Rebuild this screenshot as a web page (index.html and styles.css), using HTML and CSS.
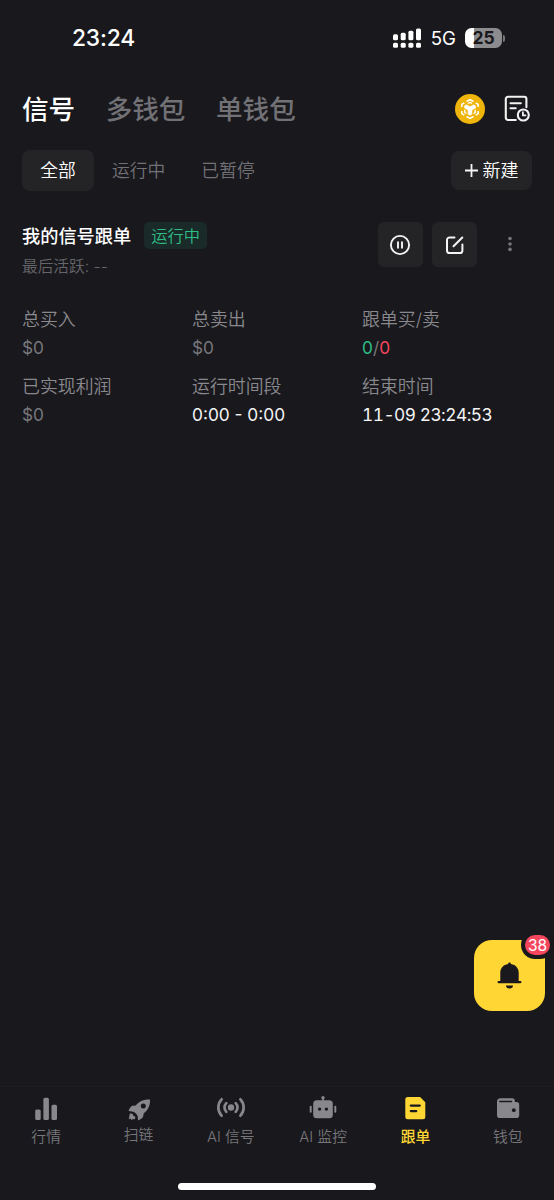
FILE: index.html
```
<!doctype html>
<html lang="zh-CN">
<head>
    <meta charset="UTF-8">
    <meta name="viewport" content="width=device-width, initial-scale=1.0">
    <title>跟单</title>
    <link rel="stylesheet" href="styles.css">
</head>
<body>
    <div class="app">
        <div class="status">
            <span class="time">23:24</span>
            <div class="status-right">
                <svg class="signal" width="28" height="20" viewBox="0 0 28 20" fill="#fff">
                    <rect x="0" y="6.3" width="5" height="6" rx="1.5"/>
                    <rect x="7.7" y="4.8" width="5" height="7.5" rx="1.5"/>
                    <rect x="15.4" y="2.8" width="5" height="9.5" rx="1.5"/>
                    <rect x="23" y="0.6" width="5" height="11.7" rx="1.5"/>
                    <rect x="0" y="14.7" width="5" height="5" rx="1.5"/>
                    <rect x="7.7" y="14.7" width="5" height="5" rx="1.5"/>
                    <rect x="15.4" y="14.7" width="5" height="5" rx="1.5"/>
                    <rect x="23" y="14.7" width="5" height="5" rx="1.5"/>
                </svg>
                <span class="net">5G</span>
                <div class="battery">25</div>
                <div class="battery-cap"></div>
            </div>
        </div>

        <div class="header">
            <div class="tabs">
                <span class="tab active">信号</span>
                <span class="tab">多钱包</span>
                <span class="tab">单钱包</span>
            </div>
            <svg class="coin" width="30" height="30" viewBox="0 0 30 30">
                <circle cx="15" cy="15" r="15" fill="#f0b50b"/>
                <path d="M11.5 7.5 15 5.5l3.5 2M9.3 8.8 6.8 10.3V13M20.7 8.800l2.500 1.500V13M6.800 17v2.700l2.500 1.500M23.200 17v2.700l-2.500 1.500M11.500 22.500l3.500 2 3.500-2" fill="none" stroke="#fff" stroke-width="1.5"/>
                <path d="M9.8 15.8v2.700l1.700 1M20.200 15.800v2.700l-1.700 1M13 9.500l2-1.100 2 1.100" fill="none" stroke="#fff" stroke-width="1.4"/>
                <path d="M9.2 11.8 11.5 10.5 15 12.5 18.5 10.5 20.8 11.8v2.300L17.200 16.200v4L15 21.500l-2.200-1.300v-4L9.200 14.100z" fill="#fff"/>
            </svg>
            <svg class="history" width="26" height="27" viewBox="0 0 26 27" fill="none" stroke="#f2f2f3" stroke-width="2.1" stroke-linecap="round" stroke-linejoin="round">
                <path d="M11.8 25H4a2.2 2.2 0 0 1-2.2-2.2V4A2.2 2.2 0 0 1 4 1.8h16.2A2.2 2.2 0 0 1 22.4 4v8.3"/>
                <path d="M6.5 8.2h10.3M6.5 13.3h5.2"/>
                <circle cx="19.3" cy="20" r="5.5"/>
                <path d="M18.9 17.2v3.2h2.5" stroke-width="1.8"/>
            </svg>
        </div>

        <div class="filters">
            <span class="filter active">全部</span>
            <span class="filter">运行中</span>
            <span class="filter">已暂停</span>
            <button class="add">
                <svg width="13" height="13" viewBox="0 0 13 13" stroke="#f4f4f5" stroke-width="1.8"><path d="M6.5 0v13M0 6.5h13"/></svg>
                <span>新建</span>
            </button>
        </div>

        <div class="card">
            <div class="card-head">
                <div class="card-info">
                    <div class="card-title"><span>我的信号跟单</span><span class="tag">运行中</span></div>
                    <div class="last">最后活跃: --</div>
                </div>
                <button class="icon-btn">
                    <svg width="22" height="22" viewBox="0 0 22 22" fill="none" stroke="#f4f4f5" stroke-width="1.9"><circle cx="11" cy="11" r="9.1"/><path d="M9 7.4v7.2M13 7.4v7.2"/></svg>
                </button>
                <button class="icon-btn">
                    <svg width="20" height="20" viewBox="0 0 20 20" fill="none" stroke="#f4f4f5" stroke-width="2" stroke-linecap="round"><path d="M9.5 2.4H4.6A2.6 2.6 0 0 0 2 5v10.4A2.6 2.6 0 0 0 4.6 18h10.2a2.6 2.6 0 0 0 2.6-2.6V9.5M8.5 11.3 17.3 2.5"/></svg>
                </button>
                <svg class="more" width="6" height="16" viewBox="0 0 6 16" fill="#77777b"><circle cx="3" cy="2.5" r="1.8"/><circle cx="3" cy="8" r="1.8"/><circle cx="3" cy="13.4" r="1.8"/></svg>
            </div>
            <div class="stats">
                <div class="stat">
                    <div class="label">总买入</div>
                    <div class="value">$0</div>
                </div>
                <div class="stat">
                    <div class="label">总卖出</div>
                    <div class="value">$0</div>
                </div>
                <div class="stat">
                    <div class="label">跟单买/卖</div>
                    <div class="value"><span class="buy">0</span>/<span class="sell">0</span></div>
                </div>
                <div class="stat">
                    <div class="label">已实现利润</div>
                    <div class="value">$0</div>
                </div>
                <div class="stat">
                    <div class="label">运行时间段</div>
                    <div class="value light">0:00 - 0:00</div>
                </div>
                <div class="stat">
                    <div class="label">结束时间</div>
                    <div class="value light date">11-09 23:24:53</div>
                </div>
            </div>
        </div>

        <button class="bell">
            <svg width="25" height="27" viewBox="0 0 25 27" fill="#19181d">
                <path d="M11.1 2a1.4 1.4 0 0 1 2.8 0c4.8.7 7.8 4.2 7.8 8.6V19h1.7a1.1 1.1 0 0 1 0 2.2H1.6a1.1 1.1 0 0 1 0-2.2h1.7v-8.4C3.3 6.2 6.3 2.7 11.1 2z"/>
                <path d="M9 23.6h7a3.5 3 0 0 1-7 0z"/>
            </svg>
            <span class="badge">38</span>
        </button>

        <div class="nav">
            <div class="nav-item">
                <svg width="28" height="26" viewBox="0 0 28 26" fill="#88888c">
                    <rect x="3.2" y="13.5" width="5.5" height="10.5" rx="1.5"/>
                    <rect x="11.4" y="1.7" width="5.5" height="22.3" rx="1.5"/>
                    <rect x="19.5" y="8.8" width="5.5" height="15.2" rx="1.5"/>
                </svg>
                <span>行情</span>
            </div>
            <div class="nav-item raised">
                <svg width="28" height="26" viewBox="0 0 28 26" fill="#88888c">
                    <path fill-rule="evenodd" d="M26 3.5C20 3.4 15.2 5 11.8 9.500l-3.600.3c-1 .2-3.800 4.200-3.500 5.300l4.500.6c2 .7 3.800 2.500 4.600 4.700l.2 3.700c.4 1 4.300-1.700 5-3l.8-3.800C24.500 13.700 26.300 9 26 3.500zM19.300 7.600a2.500 2.500 0 1 1 0 5 2.500 2.500 0 0 1 0-5z"/>
                    <path d="M6 17.300 8.700 18l.6 1.800 2.100.9-.5 2.500-2-.3-1.300 1.300-1.100-1.600-1.800.7.500-2.400z"/>
                </svg>
                <span>扫链</span>
            </div>
            <div class="nav-item">
                <svg width="28" height="26" viewBox="0 0 28 26" fill="none" stroke="#88888c" stroke-width="2.7" stroke-linecap="round">
                    <circle cx="14" cy="11.5" r="3.2" fill="#88888c" stroke="none"/>
                    <path d="M9.3 7.1a6.3 6.3 0 0 0 0 8.8M18.7 7.1a6.3 6.3 0 0 1 0 8.8M4.6 3.3a12 12 0 0 0 0 16.4M23.4 3.3a12 12 0 0 1 0 16.4"/>
                </svg>
                <span>AI 信号</span>
            </div>
            <div class="nav-item">
                <svg width="28" height="26" viewBox="0 0 28 26" fill="#88888c">
                    <circle cx="14" cy="1.7" r="1.7"/>
                    <path d="M13.2 1.5h1.6v4h-1.6z"/>
                    <rect x="4.2" y="4.3" width="19.6" height="18" rx="3.5"/>
                    <rect x="0.7" y="9.7" width="2" height="7" rx="1"/>
                    <rect x="25.3" y="9.7" width="2" height="7" rx="1"/>
                    <circle cx="10.6" cy="13.1" r="1.7" fill="#19181d"/>
                    <circle cx="17.4" cy="13.1" r="1.7" fill="#19181d"/>
                </svg>
                <span>AI 监控</span>
            </div>
            <div class="nav-item active">
                <svg width="28" height="26" viewBox="0 0 28 26">
                    <path d="M6.8 1h12.3l5.2 5.2v14.6a2.5 2.5 0 0 1-2.5 2.5h-15a2.5 2.5 0 0 1-2.5-2.5V3.5A2.5 2.5 0 0 1 6.8 1z" fill="#ffd633"/>
                    <path d="M9.8 9.6h9M9.8 15.1h5.5" stroke="#19181d" stroke-width="2.2" stroke-linecap="round"/>
                </svg>
                <span>跟单</span>
            </div>
            <div class="nav-item">
                <svg width="28" height="26" viewBox="0 0 28 26">
                    <path d="M6.5 2.3h11.8a2.5 2.5 0 0 1 2.5 2.5V6h1.7a2.7 2.7 0 0 1 2.7 2.7v10.6a2.8 2.8 0 0 1-2.8 2.8H5.8A2.8 2.8 0 0 1 3 19.3V5.8a3.5 3.5 0 0 1 3.5-3.5z" fill="#88888c"/>
                    <path d="M5.8 5.5h11.7" stroke="#19181d" stroke-width="1.5" stroke-linecap="round"/>
                    <circle cx="19.8" cy="14.2" r="1.9" fill="#19181d"/>
                </svg>
                <span>钱包</span>
            </div>
        </div>
        <div class="home-bar"></div>
    </div>
</body>
</html>
```
FILE: styles.css
```
* {
    box-sizing: border-box;
}
body {
    margin: 0;
    background: #19181d;
    color: #fff;
    font-family: Inter, "Noto Sans CJK SC", sans-serif;
    font-weight: 350;
}
button {
    border: none;
    padding: 0;
    color: inherit;
    font-family: inherit;
    font-weight: inherit;
    cursor: pointer;
}
svg {
    display: block;
    flex: none;
}
.app {
    position: relative;
    height: 1200px;
    display: flex;
    flex-direction: column;
    overflow: hidden;
}
.status {
    height: 76px;
    padding: 0 49px 0 72px;
    display: flex;
    align-items: center;
    justify-content: space-between;
}
.time {
    padding-bottom: 2px;
    font-size: 22.8px;
    font-weight: 550;
    letter-spacing: -0.2px;
}
.status-right {
    display: flex;
    align-items: center;
}
.net {
    margin: 0 9px 0 10px;
    font-size: 18.7px;
    font-weight: 400;
}
.battery {
    width: 37px;
    height: 20px;
    border-radius: 6.5px;
    background: linear-gradient(90deg, #fff 9px, #8c8c8e 9px);
    color: #19181d;
    font-size: 17.5px;
    font-weight: 650;
    line-height: 20px;
    text-align: center;
}
.battery-cap {
    width: 2px;
    height: 7px;
    margin-left: 1px;
    border-radius: 0 2px 2px 0;
    background: #77777a;
}
.header {
    height: 64px;
    padding: 1px 24px 0 22px;
    display: flex;
    align-items: center;
}
.tabs {
    flex: 1;
    display: flex;
    gap: 30.5px;
}
.tab {
    color: #717176;
    font-size: 26.6px;
    line-height: 36px;
    font-weight: 500;
}
.tab.active {
    color: #fff;
}
.history {
    margin-left: 19px;
}
.filters {
    height: 61px;
    padding: 0 22px;
    display: flex;
    align-items: center;
    font-size: 17.8px;
    line-height: 26px;
}
.filter {
    margin-right: 36px;
    color: #717176;
}
.filter.active {
    width: 72px;
    height: 41px;
    margin-right: 18px;
    border-radius: 8px;
    background: #242426;
    color: #fff;
    line-height: 42px;
    text-align: center;
}
.add {
    width: 81px;
    height: 39px;
    margin-left: auto;
    display: flex;
    align-items: center;
    justify-content: center;
    gap: 5px;
    border-radius: 8px;
    background: #242426;
    font-size: 18px;
    line-height: 24px;
}
.card {
    padding: 21px 22px 0;
}
.card-head {
    display: flex;
    align-items: flex-start;
}
.card-info {
    flex: 1;
}
.card-title {
    height: 27px;
    display: flex;
    align-items: center;
    font-size: 18.2px;
    line-height: 26px;
    font-weight: 500;
}
.tag {
    width: 63px;
    height: 27px;
    margin-left: 13px;
    border-radius: 5px;
    background: #192a29;
    color: #2ebd85;
    font-size: 16.3px;
    font-weight: 350;
    line-height: 28px;
    text-align: center;
}
.last {
    margin-top: 7px;
    color: #66666a;
    font-size: 15.7px;
    line-height: 22px;
}
.icon-btn {
    width: 45px;
    height: 45px;
    margin-right: 9.5px;
    display: flex;
    align-items: center;
    justify-content: center;
    border-radius: 6px;
    background: #242426;
}
.more {
    margin: 14px 19.5px 0 20px;
}
.stats {
    margin-top: 28px;
    display: grid;
    grid-template-columns: repeat(3, 1fr);
    row-gap: 10px;
}
.label {
    height: 28px;
    color: #89898d;
    font-size: 17.9px;
    line-height: 28px;
}
.value {
    height: 28.5px;
    color: #77777b;
    font-size: 17.3px;
    font-weight: 400;
    line-height: 28px;
    white-space: nowrap;
}
.light {
    color: #f4f4f5;
}
.date {
    font-variant-numeric: tabular-nums;
    letter-spacing: -0.5px;
}
.buy {
    color: #2ebd85;
}
.sell {
    color: #f6465d;
}
.bell {
    position: absolute;
    right: 9px;
    top: 940px;
    width: 71px;
    height: 71px;
    display: flex;
    align-items: center;
    justify-content: center;
    border-radius: 18px;
    background: #ffd633;
}
.badge {
    position: absolute;
    right: -9px;
    top: -9px;
    height: 28px;
    width: 33px;
    border: 4px solid #19181d;
    border-radius: 14px;
    background: #f6465d;
    color: #fff;
    font-size: 15.5px;
    font-weight: 400;
    line-height: 21px;
    text-align: center;
}
.nav {
    height: 77px;
    margin-top: auto;
    padding-top: 9px;
    display: grid;
    grid-template-columns: repeat(6, 1fr);
    border-top: 1px solid #1d1c21;
}
.nav-item {
    display: flex;
    flex-direction: column;
    align-items: center;
    gap: 4px;
    color: #77777b;
    font-size: 14.8px;
    line-height: 22px;
    white-space: nowrap;
}
.nav-item.raised span {
    margin-top: -2px;
}
.nav-item.active {
    color: #ffd633;
    font-weight: 500;
}
.home-bar {
    width: 198px;
    height: 7px;
    margin: 20px auto 10px;
    border-radius: 4px;
    background: #fff;
}
```
